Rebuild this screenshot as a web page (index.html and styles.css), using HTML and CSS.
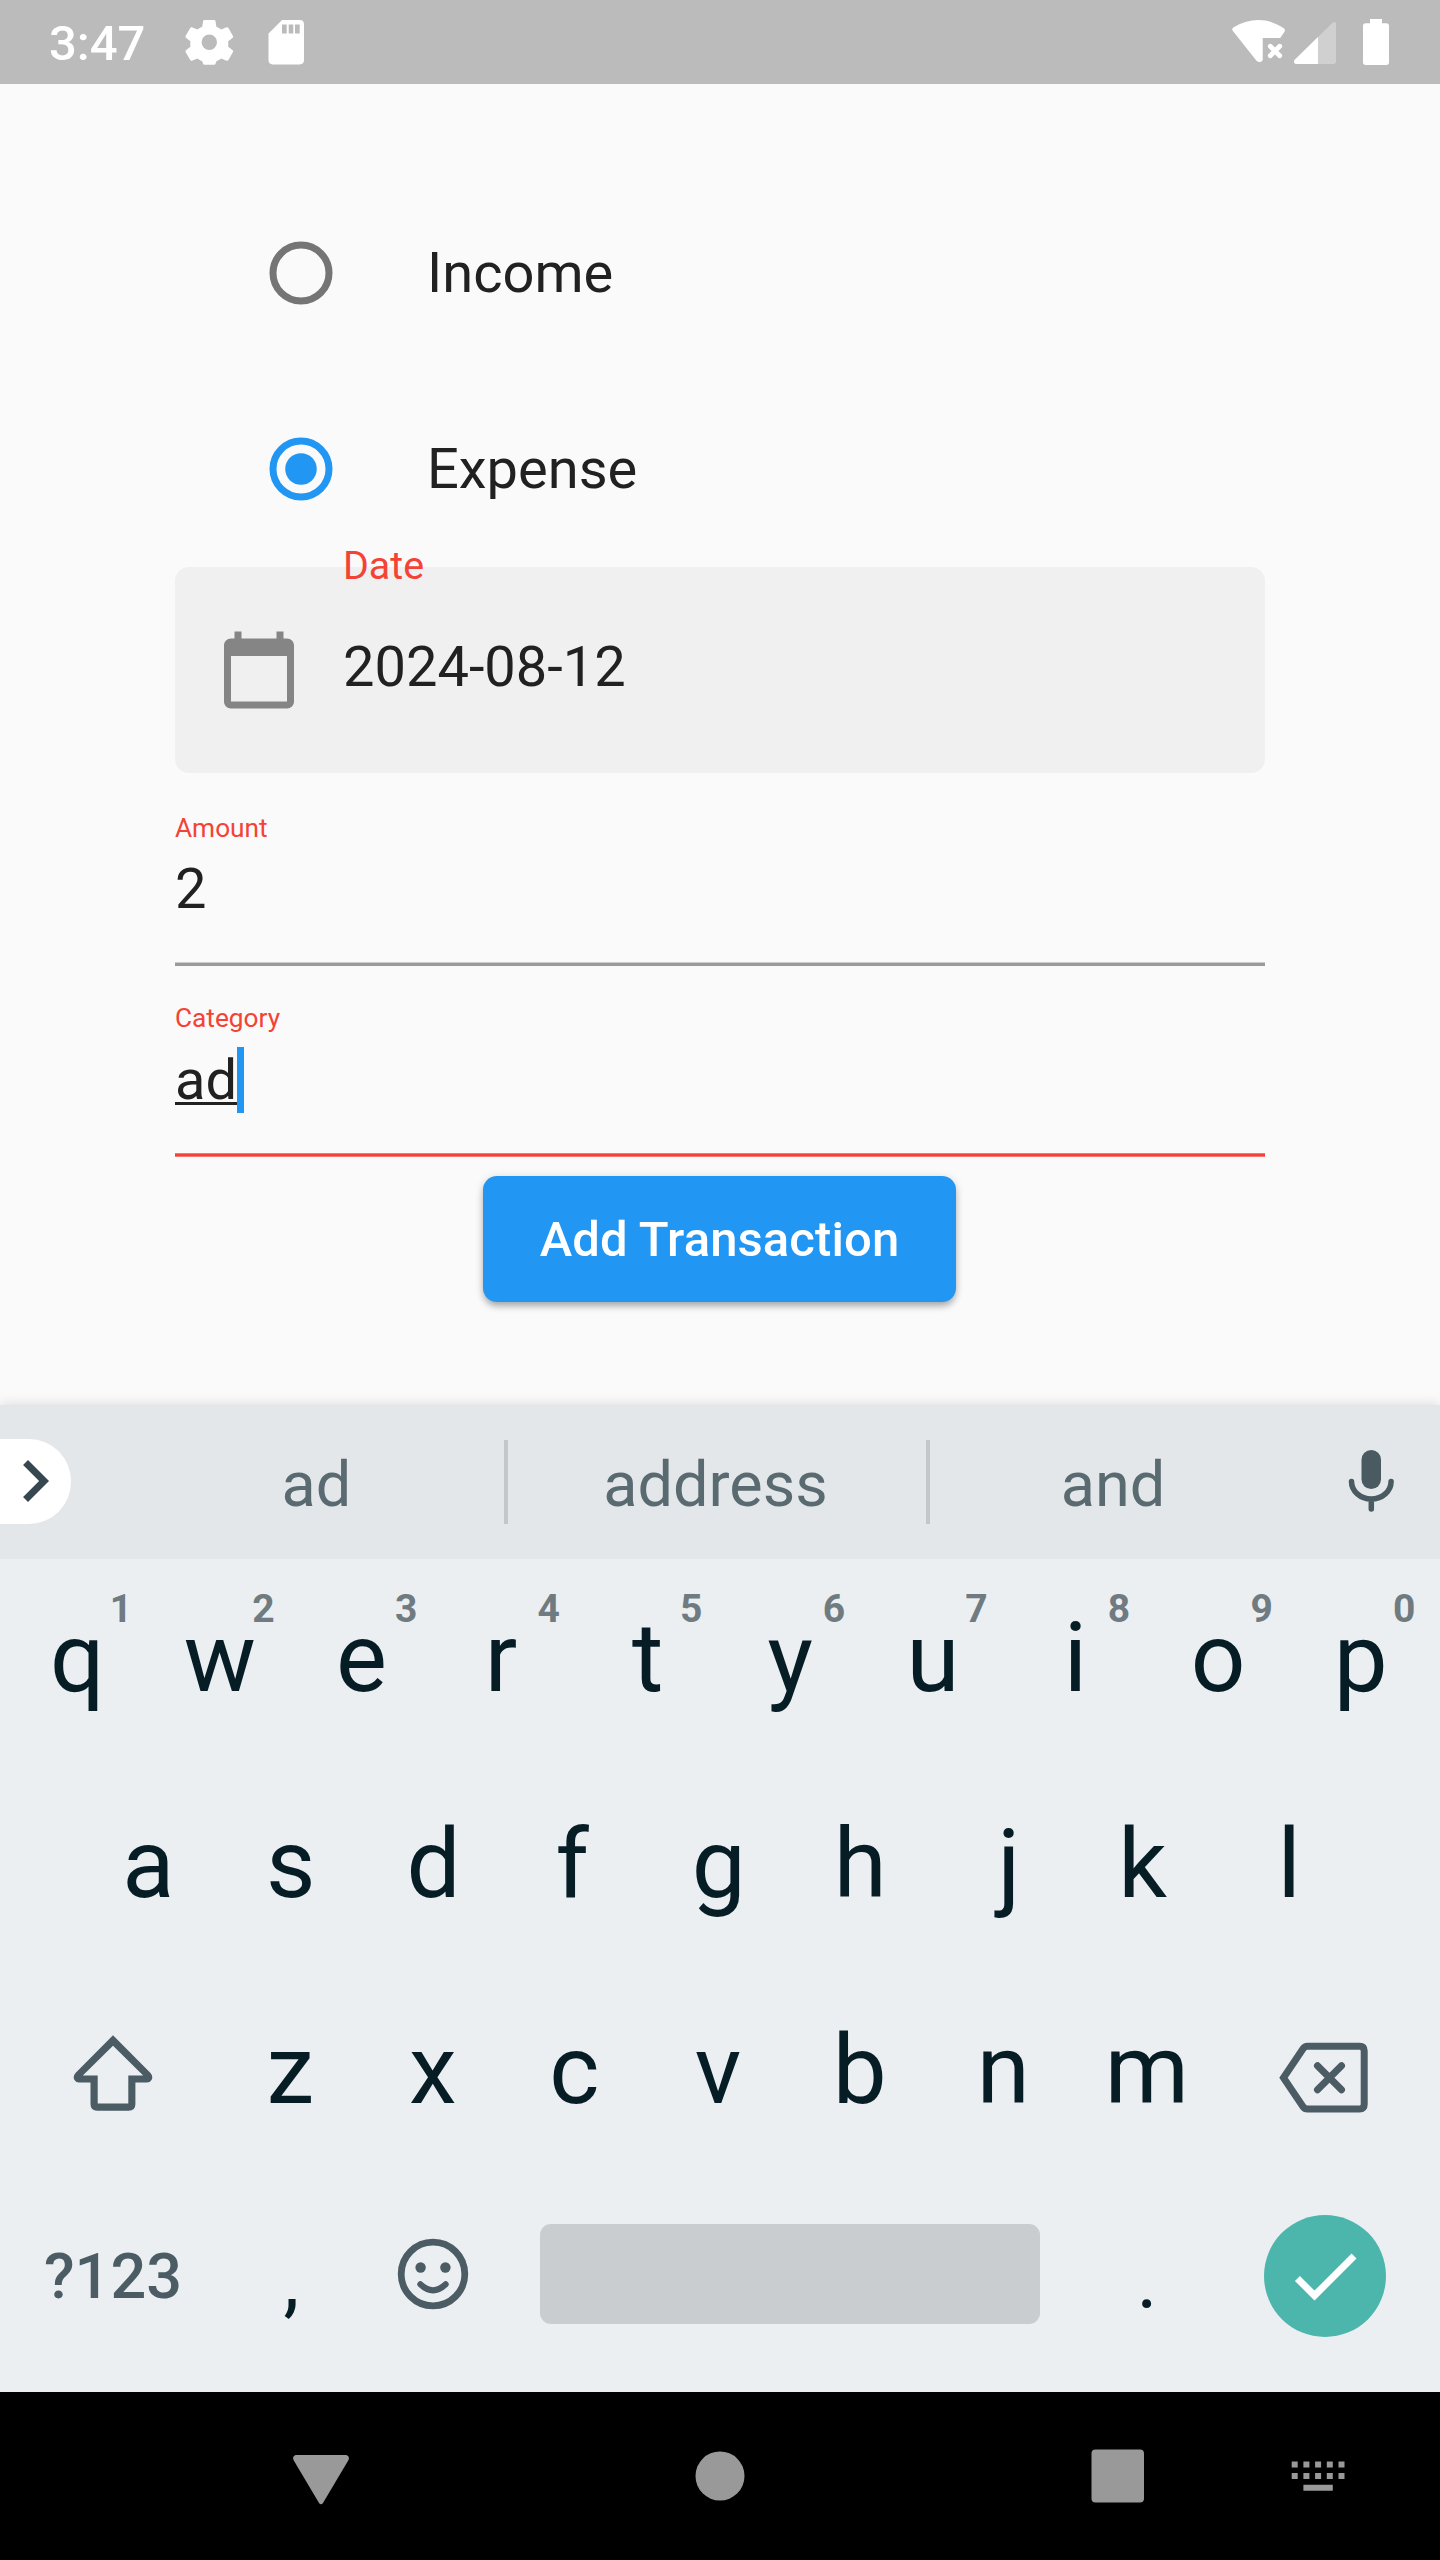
FILE: index.html
```html
<!DOCTYPE html>
<html lang="en">
<head>
<meta charset="utf-8">
<title>Add Transaction</title>
<link rel="stylesheet" href="styles.css">
</head>
<body>
<div class="screen">
  <header class="status">
    <span class="clock">3:47</span>
    <svg class="status-left" width="126" height="84" viewBox="182 0 126 84">
      <path fill-rule="evenodd" d="M204.500 20h9.600q1.200 0 1.400 1.200l.9 5.600q2.600 1 4.900 2.700l5.300-2.200q1.200-.4 1.800.7l4.600 8q.6 1-.3 1.800l-4.500 3.500q.3 2.700 0 5.400l4.500 3.500q.9.800.3 1.800l-4.600 8q-.6 1.100-1.800.7l-5.300-2.200q-2.300 1.700-4.900 2.700l-.9 2.600q-.2 1-1.400 1h-9.600q-1.200 0-1.400-1l-.9-2.600q-2.600-1-4.900-2.700l-5.300 2.200q-1.200.4-1.800-.7l-4.600-8q-.6-1 .3-1.800l4.500-3.500q-.3-2.700 0-5.400l-4.500-3.500q-.9-.8-.3-1.800l4.600-8q.6-1.100 1.800-.7l5.300 2.200q2.300-1.700 4.900-2.700l.9-5.600q.2-1.200 1.400-1.200zM209.300 34.500a7.700 7.700 0 1 0 0 15.400a7.700 7.700 0 1 0 0-15.400z" fill="#fff"/>
      <path fill-rule="evenodd" d="M282 20h17.600q4.400 0 4.400 4.400v35.600q0 4.400-4.400 4.400h-26.700q-4.400 0-4.400-4.400V33.400zM282 24.500v9h4.700v-9zM288.700 24.500v9h4.600v-9zM295 24.500v9h4.700v-9z" fill="#fff"/>
    </svg>
    <svg class="status-right" width="170" height="84" viewBox="1228 0 170 84">
      <path d="M1258.500 20c9 0 17.500 3 25.300 8.300q1.800 1.500.7 3.500l-4.300 6.200h-17.500v22.200q-2.800 3.500-6.200.6l-23.800-30q-1.200-1.900.6-3.300c7.800-5 16.200-7.500 25.200-7.500z" fill="#fff"/>
      <path d="M1270.300 46.300l9.400 9.400m0-9.400l-9.400 9.400" stroke="#fff" stroke-width="4.800" stroke-linecap="round"/>
      <path d="M1294.500 60l38.300-37.500q3.200-1.700 3.200 1.800v37q0 2.700-2.700 2.700h-37q-3.500-.4-1.800-4z" fill="#d0d0d0"/>
      <path d="M1294.500 60l23.500-23v27h-21.700q-3.500-.4-1.800-4z" fill="#fff"/>
      <path d="M1370 19h12v4.300h4.300q2.700 0 2.700 2.700v36.300q0 2.700-2.700 2.700h-20.600q-2.700 0-2.700-2.700v-36.300q0-2.700 2.700-2.700h4.300z" fill="#fff"/>
    </svg>
  </header>

  <main class="form">
    <label class="option">
      <svg width="64" height="64" viewBox="-32 -32 64 64"><circle r="28" fill="none" stroke="#757575" stroke-width="7"/></svg>
      <span>Income</span>
    </label>
    <label class="option">
      <svg width="64" height="64" viewBox="-32 -32 64 64"><circle r="28" fill="none" stroke="#2196f3" stroke-width="7"/><circle r="15.750" fill="#2196f3"/></svg>
      <span>Expense</span>
    </label>
    <div class="date">
      <svg width="84" height="84" viewBox="0 0 24 24"><path fill="#858585" d="M20 3h-1V1h-2v2H7V1H5v2H4c-1.100 0-2 .9-2 2v16c0 1.100.9 2 2 2h16c1.100 0 2-.9 2-2V5c0-1.100-.9-2-2-2zm0 18H4V8h16v13z"/></svg>
      <div class="date-text">
        <span class="date-label">Date</span>
        <span class="date-value">2024-08-12</span>
      </div>
    </div>
    <div class="field amount">
      <span class="label">Amount</span>
      <span class="value">2</span>
    </div>
    <div class="field category">
      <span class="label">Category</span>
      <span class="value"><span class="composing">ad</span><i class="caret"></i></span>
    </div>
    <button class="submit">Add Transaction</button>
  </main>

  <section class="keyboard">
    <div class="suggestions">
      <div class="expand">
        <svg width="84" height="84" viewBox="0 0 24 24"><path fill="#37474f" d="M8.590 16.590L13.170 12 8.590 7.410 10 6l6 6-6 6z"/></svg>
      </div>
      <span class="word first">ad</span>
      <span class="word middle">address</span>
      <span class="word last">and</span>
      <svg class="mic" width="46" height="64" viewBox="1348 1450 46 64">
        <rect x="1361.500" y="1450" width="19.500" height="39" rx="9.750" fill="#495a61"/>
        <path d="M1351.500 1481.500a19.800 17.500 0 0 0 39.600 0M1371.300 1500v9" fill="none" stroke="#495a61" stroke-width="5.500" stroke-linecap="round"/>
      </svg>
    </div>
    <div class="row row-top">
      <span class="key">q<sup>1</sup></span><span class="key">w<sup>2</sup></span><span class="key nudge-l1">e<sup>3</sup></span><span class="key nudge-l4">r<sup>4</sup></span><span class="key">t<sup>5</sup></span><span class="key">y<sup>6</sup></span><span class="key">u<sup>7</sup></span><span class="key">i<sup>8</sup></span><span class="key">o<sup>9</sup></span><span class="key">p<sup>0</sup></span>
    </div>
    <div class="row row-home">
      <span class="key">a</span><span class="key">s</span><span class="key">d</span><span class="key nudge-l4">f</span><span class="key">g</span><span class="key nudge-l1">h</span><span class="key nudge-r5">j</span><span class="key nudge-l4">k</span><span class="key">l</span>
    </div>
    <div class="row row-low">
      <span class="wide shift"><svg width="80" height="78" viewBox="73 2034 80 78"><path fill="#4b5c64" fill-rule="evenodd" d="M113 2035.300L150.500 2073q3 3.500 1 7q-1.500 2.600-4.500 2.600H135.400V2104q0 6.700-6.700 6.700H97.200q-6.700 0-6.700-6.700V2082.600H79q-3 0-4.500-2.600q-2-3.500 1-7zM113 2045.800L82.800 2075.500H97.700V2103.600H128.300V2075.500H143.200z"/></svg></span>
      <span class="key">z</span><span class="key">x</span><span class="key nudge-l1">c</span><span class="key">v</span><span class="key nudge-l1">b</span><span class="key">n</span><span class="key nudge-r1">m</span>
      <span class="wide backspace"><svg width="90" height="72" viewBox="1279 2042 90 72"><path d="M1283.500 2077.700L1303.200 2048.500Q1304.700 2046.200 1307.500 2046.200H1359.500Q1364.200 2046.200 1364.200 2050.900V2104.300Q1364.200 2109 1359.500 2109H1307.500Q1304.700 2109 1303.200 2106.900Z" fill="none" stroke="#4b5c64" stroke-width="7"/><path d="M1317.500 2065.800l24 24m0-24l-24 24" stroke="#4b5c64" stroke-width="7" stroke-linecap="round"/></svg></span>
    </div>
    <div class="row row-bottom">
      <span class="symbols">?123</span>
      <span class="key small">,</span>
      <span class="key emoji"><svg width="72" height="72" viewBox="-36 -36 72 72"><circle r="31.800" fill="none" stroke="#4b5c64" stroke-width="6.800"/><circle cx="-12.400" cy="-6.500" r="5.200" fill="#4b5c64"/><circle cx="12.400" cy="-6.500" r="5.200" fill="#4b5c64"/><path d="M-12.700 10.300q12.700 12 25.400 0" fill="none" stroke="#4b5c64" stroke-width="6" stroke-linecap="round"/></svg></span>
      <span class="space"></span>
      <span class="key small period">.</span>
      <span class="enter"><svg width="84" height="84" viewBox="0 0 24 24"><path fill="#fff" d="M9 16.170L4.830 12l-1.420 1.410L9 19 21 7l-1.410-1.410z"/></svg></span>
    </div>
  </section>

  <nav class="nav">
    <svg class="back" width="56" height="50" viewBox="0 0 56 50"><path fill="#999" d="M2.500 0h51q3.500 1.500 2 5L30 48q-2 2.500-4 0L.5 5Q-1 1.500 2.500 0z"/></svg>
    <svg class="home" width="50" height="50" viewBox="-25 -25 50 50"><circle r="24.500" fill="#999"/></svg>
    <svg class="recent" width="54" height="54" viewBox="0 0 54 54"><rect x=".5" y=".5" width="52.500" height="53" rx="4" fill="#999"/></svg>
    <svg class="ime" width="54" height="32" viewBox="1291 2460 54 32"><path fill="#999" d="M1291.700 2461.500h6v6h-6zm11.700 0h6v6h-6zm11.700 0h6v6h-6zm11.700 0h6v6h-6zm11.700 0h6v6h-6zM1291.700 2473h6v6h-6zm11.700 0h6v6h-6zm11.700 0h6v6h-6zm11.700 0h6v6h-6zm11.700 0h6v6h-6zM1303.400 2484.700h29.400v6h-29.400z"/></svg>
  </nav>
</div>
</body>
</html>
```
FILE: styles.css
```css
* { box-sizing: border-box; }
body { margin: 0; font-family: Roboto, "Liberation Sans", sans-serif; color: #212121; }
svg { display: block; flex: none; }
.screen { width: 1440px; height: 2560px; background: #fafafa; display: flex; flex-direction: column; overflow: hidden; }

.status { height: 84px; background: #bbb; display: flex; align-items: flex-start; flex: none; }
.clock { width: 182px; padding-left: 49px; font-size: 49px; line-height: 58px; padding-top: 15px; font-weight: 500; color: #fff; }
.status-right { margin-left: auto; margin-right: 42px; }

.form { height: 1321px; flex: none; padding: 90.500px 175px 0; display: flex; flex-direction: column; }
.option { height: 196px; flex: none; padding-left: 94px; display: flex; align-items: center; gap: 94px; font-size: 56px; line-height: 66px; }
.date { height: 206px; margin-top: .5px; flex: none; background: #f0f0f0; border-radius: 14px; padding: 0 42px; display: flex; align-items: center; gap: 42px; }
.date-text { height: 206px; display: flex; flex-direction: column; }
.date-label { font-size: 39.400px; line-height: 46px; margin-top: -24px; color: #f44336; }
.date-value { font-size: 56px; line-height: 66px; margin-top: 45px; }
.field { display: flex; flex-direction: column; flex: none; background: no-repeat left bottom / 100% 4px; }
.amount { height: 193px; background-image: linear-gradient(#ccc 1px, #9a9a9a 1px); }
.category { height: 191px; background-image: linear-gradient(#f7776e 1px, #f44336 1px, #f44336 3px, #f7776e 3px); }
.label { font-size: 26.250px; line-height: 30px; color: #f44336; }
.amount .label { margin-top: 40px; }
.category .label { margin-top: 37px; }
.value { font-size: 56px; line-height: 66px; height: 66px; display: flex; }
.amount .value { margin-top: 13px; }
.category .value { margin-top: 14px; }
.composing { height: 58px; border-bottom: 3px solid #212121; }
.caret { width: 7px; height: 66px; background: #2196f3; }
.submit { width: 473px; height: 126px; flex: none; align-self: center; margin: 19px 1px 0 0; padding: 2px 0 0; border: 0; border-radius: 14px; background: #2196f3; color: #fff; font: 500 49px/58px Roboto, sans-serif; letter-spacing: .1px; box-shadow: 0 5px 7px -1px rgba(0,0,0,.28), 0 1px 10px rgba(0,0,0,.12); }

.keyboard { height: 987px; flex: none; background: #ebeff2; box-shadow: 0 0 12px rgba(0,0,0,.14); }
.suggestions { height: 154px; background: #e3e7ea; display: flex; align-items: center; }
.expand { width: 71px; height: 85px; margin: -1px 57px 0 0; background: #fff; border-radius: 0 42px 42px 0; display: flex; }
.expand svg { margin-left: -7px; }
.word { height: 84px; font-size: 63px; line-height: 90px; text-align: center; color: #5a6a71; flex: none; }
.first { width: 380px; padding-left: 1px; border-right: 4px solid #c2c7ca; }
.middle { width: 422px; padding-right: 3px; border-right: 4px solid #c2c7ca; }
.last { width: 366px; }
.mic { margin-left: 52px; }
.row { height: 206px; display: flex; }
.key { width: 142.600px; flex: none; text-align: center; font-size: 96px; line-height: 112px; color: #061d26; position: relative; }
.nudge-l1 { padding-right: 2px; }
.nudge-l4 { padding-right: 8px; }
.nudge-r1 { padding-left: 2px; }
.nudge-r5 { padding-left: 10px; }
.row-top { padding: 43px 6px 0; }
.row-home { padding: 43px 77px 0; }
.row-low { padding: 43px 0 0; }
.key sup { position: absolute; right: 16.500px; top: -16px; font-size: 39px; line-height: 46px; font-weight: 700; color: #6f7b80; }
.wide { width: 219px; }
.shift { padding: 20px 0 0 73px; }
.backspace { padding: 28px 0 0 62px; }
.row-bottom { height: 215px; }
.symbols { width: 220px; padding: 63px 0 0 6px; font-size: 63px; line-height: 74px; font-weight: 500; text-align: center; color: #4b5c64; }
.small { font-size: 80px; line-height: 94px; padding-top: 57px; }
.period { padding-left: 1px; }
.emoji { padding: 61px 0 0 34px; }
.space { width: 500px; height: 100px; margin: 47px 35px 0; border-radius: 11px; background: #c9cdd0; }
.enter { width: 122px; height: 122px; margin: 38px 0 0 46.500px; border-radius: 50%; background: #4db6ac; display: flex; align-items: center; justify-content: center; }

.nav { height: 168px; flex: none; background: #000; display: flex; align-items: flex-start; }
.back { margin: 63px 0 0 293px; }
.home { margin: 58.500px 0 0 345.500px; }
.recent { margin: 57px 0 0 346.500px; }
.ime { margin: 68px 0 0 146px; }
```
